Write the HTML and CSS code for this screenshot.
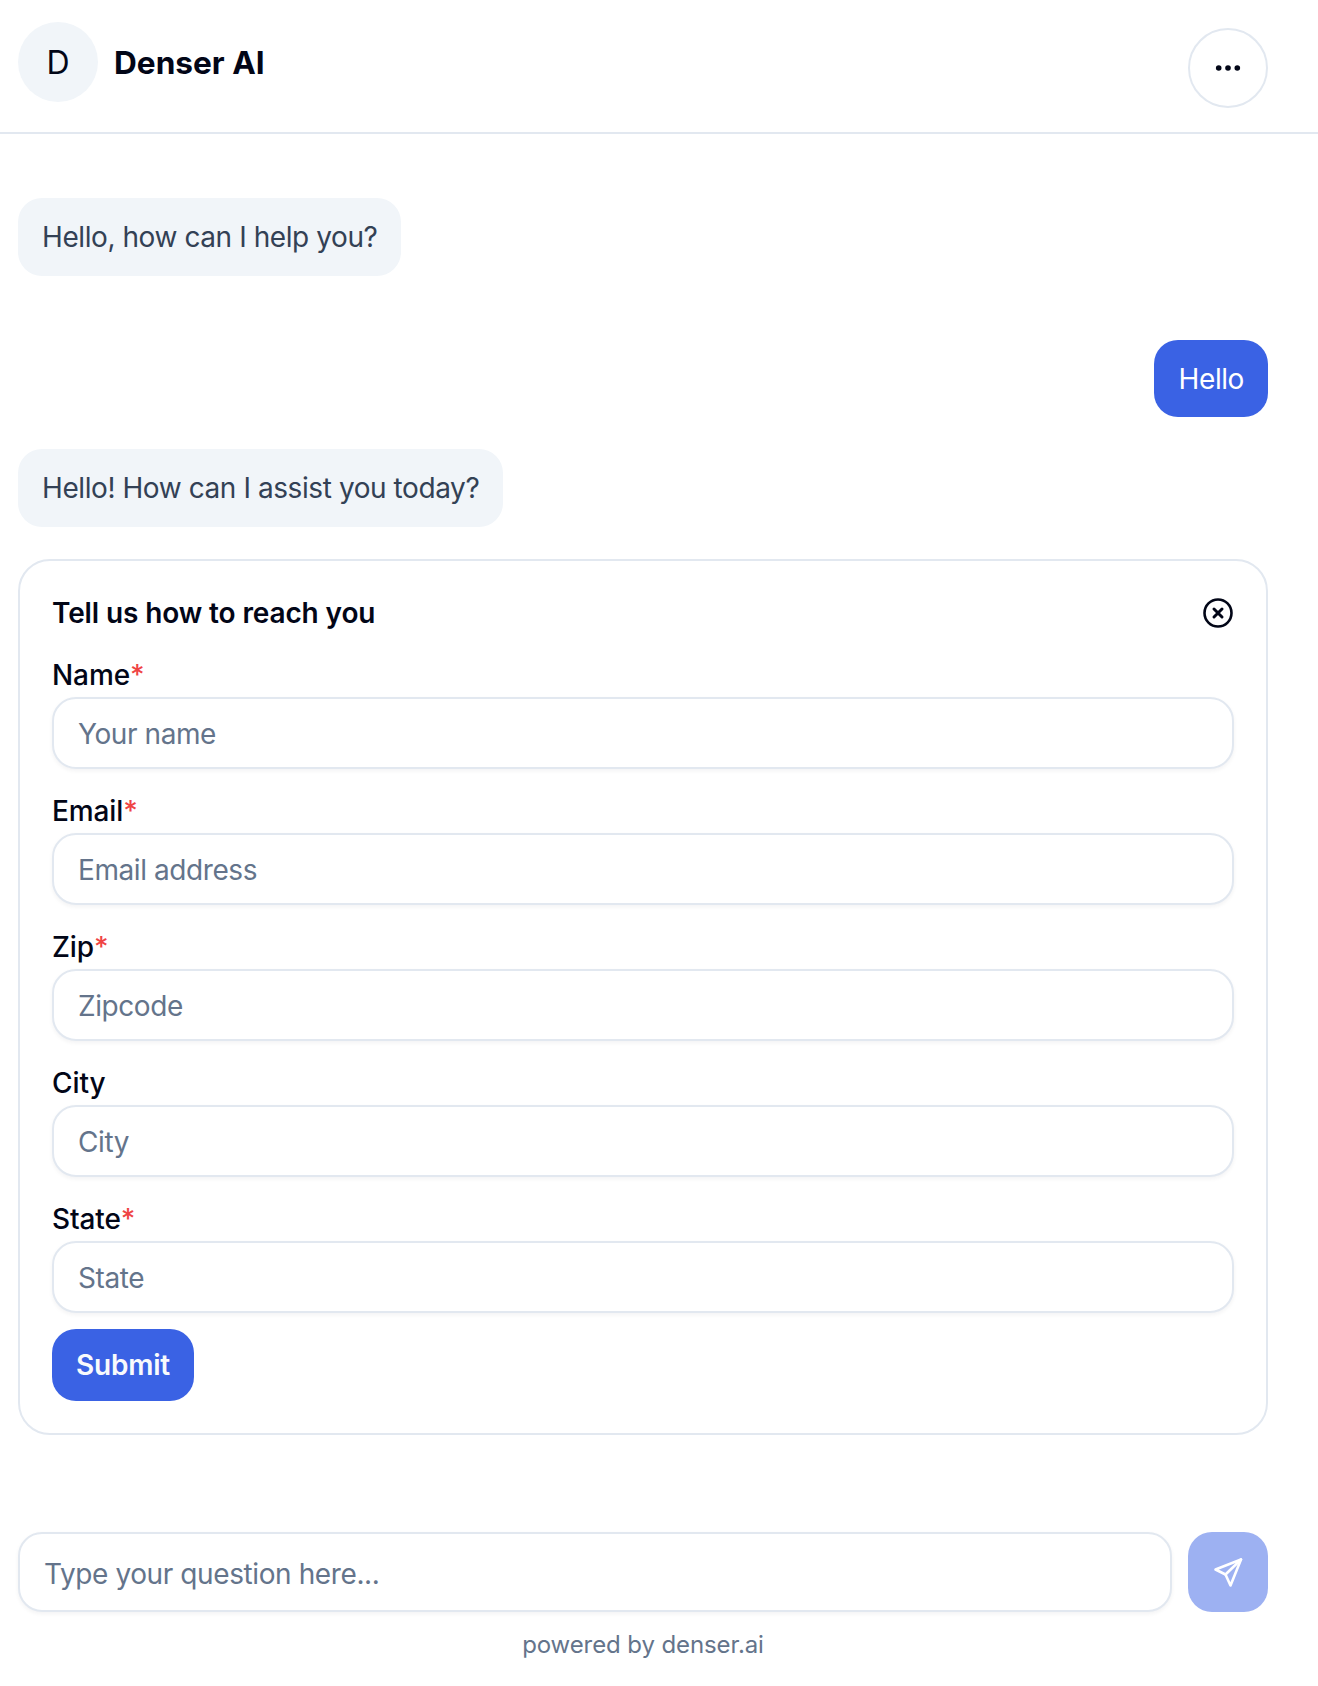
FILE: index.html
```html
<!DOCTYPE html>
<html lang="en">
<head>
<meta charset="utf-8">
<title>Denser AI</title>
<link rel="stylesheet" href="styles.css">
</head>
<body>
<div class="page">
  <header class="header">
    <div class="brand">
      <div class="avatar">D</div>
      <h1 class="brand-name">Denser AI</h1>
    </div>
    <button class="menu-btn" type="button" aria-label="Menu">
      <svg width="32" height="32" viewBox="0 0 32 32" fill="#020617"><circle cx="6.7" cy="16" r="2.8"/><circle cx="16" cy="16" r="2.8"/><circle cx="25.3" cy="16" r="2.8"/></svg>
    </button>
  </header>
  <main class="chat">
    <div class="bubble bot first">Hello, how can I help you?</div>
    <div class="bubble user">Hello</div>
    <div class="bubble bot">Hello! How can I assist you today?</div>
    <form class="card">
      <div class="card-head">
        <h2 class="card-title">Tell us how to reach you</h2>
        <svg class="close" width="32" height="32" viewBox="0 0 32 32" fill="none" stroke="#020617" stroke-width="2.6" stroke-linecap="round"><circle cx="16" cy="16" r="13.5"/><path d="M12 12l8 8M20 12l-8 8" stroke-width="3"/></svg>
      </div>
      <div class="field"><label class="label">Name<span class="req">*</span></label><input class="input" placeholder="Your name"></div>
      <div class="field"><label class="label">Email<span class="req">*</span></label><input class="input" placeholder="Email address"></div>
      <div class="field"><label class="label">Zip<span class="req">*</span></label><input class="input" placeholder="Zipcode"></div>
      <div class="field"><label class="label">City</label><input class="input" placeholder="City"></div>
      <div class="field"><label class="label">State<span class="req">*</span></label><input class="input" placeholder="State"></div>
      <button class="submit" type="button">Submit</button>
    </form>
  </main>
  <div class="composer">
    <input class="composer-input" placeholder="Type your question here...">
    <button class="send" type="button" aria-label="Send">
      <svg width="32" height="32" viewBox="0 0 32 32" fill="none" stroke="#fff" stroke-width="2.6" stroke-linecap="round" stroke-linejoin="round"><path d="M29 3.5 3.5 13.5 13.5 18.5 18.5 29.5Z"/><path d="M13.5 18.5 29 3.5"/></svg>
    </button>
  </div>
  <footer class="footer">powered by denser.ai</footer>
</div>
</body>
</html>
```
FILE: styles.css
```css
* { box-sizing: border-box; }
html, body { margin: 0; padding: 0; background: #fff; }
body { font-family: Inter, "Liberation Sans", sans-serif; color: #020617; }
.page { width: 1318px; height: 1686px; display: flex; flex-direction: column; }
.header { height: 134px; border-bottom: 2px solid #e2e8f0; padding: 22px 50px 0 18px; display: flex; justify-content: space-between; align-items: flex-start; }
.brand { display: flex; align-items: flex-start; gap: 16px; }
.avatar { width: 80px; height: 80px; padding-top: 1px; border-radius: 50%; background: #f1f5f9; display: flex; align-items: center; justify-content: center; font-size: 32px; line-height: 1; }
.brand-name { margin: 23px 0 0; font-size: 31.6px; line-height: 36px; font-weight: 700; }
.menu-btn { margin-top: 6px; width: 80px; height: 80px; border-radius: 50%; border: 2px solid #e2e8f0; background: #fff; display: flex; align-items: center; justify-content: center; padding: 0; }
.chat { padding: 64px 50px 0 18px; display: flex; flex-direction: column; align-items: flex-start; flex: 1; }
.bubble { font-size: 28px; line-height: 34px; letter-spacing: -0.42px; padding: 22px 24px; border-radius: 24px; height: 78px; }
.bot { background: #f1f5f9; color: #334155; }
.user { background: #3a62e4; color: #fff; align-self: flex-end; height: 77px; margin: 64px 0 32px; padding-left: 25px; }
.card { margin-top: 32px; width: 100%; height: 876px; border: 2px solid #e2e8f0; border-radius: 32px; padding: 32px; }
.card-head { display: flex; justify-content: space-between; align-items: center; height: 40px; margin-bottom: 22px; }
.card-title { margin: 0; font-size: 28px; line-height: 40px; font-weight: 600; letter-spacing: -0.12px; }
.field { display: flex; flex-direction: column; margin-bottom: 22px; }
.label { font-size: 28px; line-height: 40px; height: 42px; font-weight: 500; letter-spacing: -0.1px; }
.req { color: #ef4444; }
.input { height: 72px; border: 2px solid #e2e8f0; border-radius: 24px; padding: 1px 24px 0; font: 400 28px Inter, "Liberation Sans", sans-serif; letter-spacing: -0.42px; box-shadow: 0 2px 4px rgba(15, 23, 42, .05); background: #fff; width: 100%; }
.input::placeholder, .composer-input::placeholder { color: #64748b; opacity: 1; }
.submit { display: block; margin-top: -6px; width: 142px; height: 72px; border: 0; border-radius: 24px; background: #3a62e4; color: #f8fafc; font: 600 28px Inter, "Liberation Sans", sans-serif; letter-spacing: -0.2px; padding: 0; }
.composer { display: flex; gap: 16px; padding: 0 50px 0 18px; }
.composer-input { flex: 1; min-width: 0; height: 80px; border: 2px solid #e2e8f0; border-radius: 24px; padding: 3px 24px 0; font: 400 28px Inter, "Liberation Sans", sans-serif; letter-spacing: -0.4px; box-shadow: 0 2px 4px rgba(15, 23, 42, .05); background: #fff; }
.send { width: 80px; height: 80px; border: 0; border-radius: 24px; background: #9db1f2; display: flex; align-items: center; justify-content: center; padding: 0; }
.footer { height: 74px; padding: 17px 32px 0 0; text-align: center; font-size: 24px; line-height: 32px; letter-spacing: -0.1px; color: #64748b; }
```
